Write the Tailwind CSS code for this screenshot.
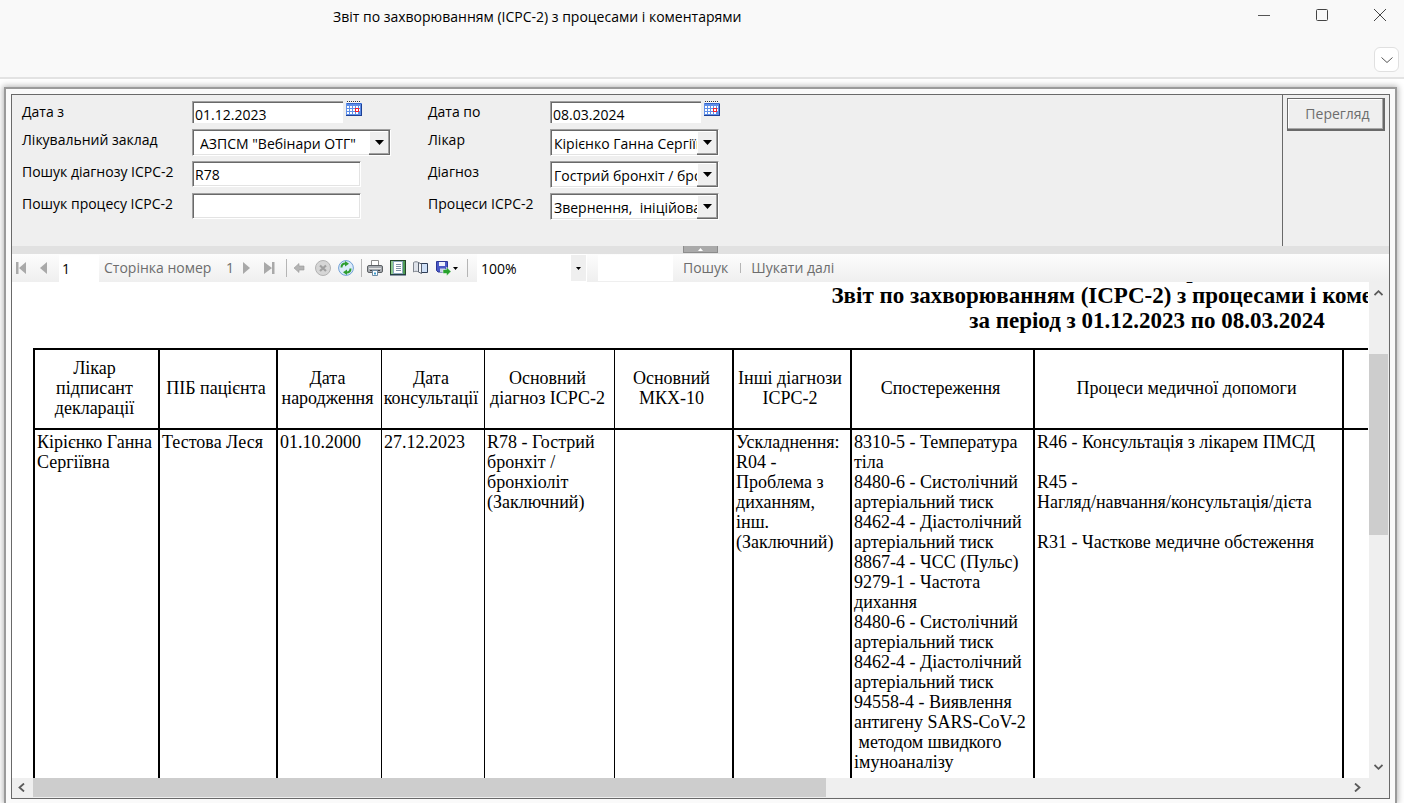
<!DOCTYPE html>
<html lang="uk">
<head>
  <meta charset="UTF-8">
  <meta name="viewport" content="width=device-width, initial-scale=1.0">
  <title>Звіт по захворюванням (ICPC-2) з процесами і коментарями</title>
  <script src="https://cdn.jsdelivr.net/npm/@tailwindcss/browser@4"></script>
</head>
<body class="h-screen flex flex-col overflow-hidden bg-white text-black text-sm leading-[22px] font-['Open_Sans','Noto_Sans',sans-serif]">

  <!-- Title bar -->
  <header class="h-[79px] shrink-0 bg-[#f9f9f9] border-b-2 border-[#e3e3e3] flex justify-between">
    <h1 class="pl-[333px] pt-1.5">Звіт по захворюванням (ICPC-2) з процесами і коментарями</h1>
    <div class="flex flex-col items-end pr-[5px]">
      <div class="flex gap-[30px] pr-[5px]">
        <button aria-label="Згорнути" class="w-7 h-[30px] flex items-center justify-center">
          <svg class="size-3" viewBox="0 0 12 12"><path d="M0 6.5h12" stroke="#555" fill="none"/></svg>
        </button>
        <button aria-label="Розгорнути" class="w-7 h-[30px] flex items-center justify-center">
          <svg class="size-3" viewBox="0 0 12 12"><rect x=".5" y=".5" width="11" height="11" rx="1" stroke="#444" fill="none"/></svg>
        </button>
        <button aria-label="Закрити" class="w-7 h-[30px] flex items-center justify-center">
          <svg class="size-3" viewBox="0 0 12 12"><path d="M0 0l12 12M12 0L0 12" stroke="#444" fill="none"/></svg>
        </button>
      </div>
      <button aria-label="Показати стрічку" class="mt-[17px] size-[25px] rounded-md border border-[#e0e0e0] bg-white flex items-center justify-center">
        <svg class="w-3 h-2" viewBox="0 0 12 8"><path d="M.5 1.5L6 6.500 11.500 1.500" stroke="#555" fill="none"/></svg>
      </button>
    </div>
  </header>

  <main class="flex-1 min-h-0 mt-2 ml-1 mr-[7px] flex flex-col border-2 border-b-0 border-[#9a9a9a] bg-[#fafafa] shadow-[0_0_6px_1px_rgba(0,0,0,0.3)] px-[5px] pt-[5px] pb-1">
    <div class="flex-1 min-h-0 flex flex-col border border-[#696969] bg-white">

      <!-- Parameters -->
      <form class="h-[151px] shrink-0 flex bg-[#efefef]">
        <div class="flex-1 grid grid-cols-[170px_236px_122px_1fr] grid-rows-[28px_32px_32px_32px] items-start pl-2.5 pt-1.5">
          <label for="date-from">Дата з</label>
          <div class="flex gap-[3px]">
            <input id="date-from" value="01.12.2023" class="w-[151px] h-[22px] pt-1 pl-0.5 bg-white border-t border-l border-[#a0a0a0] shadow-[inset_1px_1px_0_#696969]">
            <button type="button" aria-label="Календар" class="size-4">
              <svg class="size-4" viewBox="0 0 16 16"><path d="M0 2h16v13H0z" fill="#5f8fe8"/><path d="M0 14h16v1H0zM15 3h1v12h-1z" fill="#1c3f94"/><path d="M1 1h14" stroke="#fff" stroke-width="2" stroke-dasharray="1 1"/><path d="M1 .5h14" stroke="#333" stroke-dasharray="1 1"/><path d="M1 2.500h14" stroke="#3767cc" /><path d="M1 5h2v2H1zM4 5h2v2H4zM7 5h2v2H7zM10 5h2v2h-2zM13 5h1v2h-1zM1 8h2v2H1zM4 8h2v2H4zM7 8h2v2H7zM13 8h1v2h-1zM1 11h2v2H1zM4 11h2v2H4zM7 11h2v2H7zM10 11h2v2h-2z" fill="#fff"/><rect x="9.500" y="7.500" width="3" height="3" fill="#fff" stroke="#f0202c"/></svg>
            </button>
          </div>
          <label for="date-to">Дата по</label>
          <div class="flex gap-[3px]">
            <input id="date-to" value="08.03.2024" class="w-[151px] h-[22px] pt-1 pl-0.5 bg-white border-t border-l border-[#a0a0a0] shadow-[inset_1px_1px_0_#696969]">
            <button type="button" aria-label="Календар" class="size-4">
              <svg class="size-4" viewBox="0 0 16 16"><path d="M0 2h16v13H0z" fill="#5f8fe8"/><path d="M0 14h16v1H0zM15 3h1v12h-1z" fill="#1c3f94"/><path d="M1 1h14" stroke="#fff" stroke-width="2" stroke-dasharray="1 1"/><path d="M1 .5h14" stroke="#333" stroke-dasharray="1 1"/><path d="M1 2.500h14" stroke="#3767cc" /><path d="M1 5h2v2H1zM4 5h2v2H4zM7 5h2v2H7zM10 5h2v2h-2zM13 5h1v2h-1zM1 8h2v2H1zM4 8h2v2H4zM7 8h2v2H7zM13 8h1v2h-1zM1 11h2v2H1zM4 11h2v2H4zM7 11h2v2H7zM10 11h2v2h-2z" fill="#fff"/><rect x="9.500" y="7.500" width="3" height="3" fill="#fff" stroke="#f0202c"/></svg>
            </button>
          </div>

          <label for="clinic">Лікувальний заклад</label>
          <div class="relative w-[199px] h-[27px]">
            <select id="clinic" class="appearance-none size-full pt-0.5 pl-[7px] pr-5 bg-white border border-[#a0a0a0] border-r-white border-b-white shadow-[inset_1px_1px_0_#696969,inset_-1px_-1px_0_#e3e3e3]"><option>АЗПСМ "Вебінари ОТГ"</option></select>
            <span class="absolute top-0.5 bottom-px right-px w-[21px] bg-[#efefef] border-r border-b border-[#696969] shadow-[inset_-1px_-1px_0_#a0a0a0,inset_1px_1px_0_#fff] flex items-center justify-center pointer-events-none">
              <svg class="w-[9px] h-[5px]" viewBox="0 0 9 5"><path d="M0 0h9L4.500 5z"/></svg>
            </span>
          </div>
          <label for="doctor">Лікар</label>
          <div class="relative w-[169px] h-[27px]">
            <select id="doctor" class="appearance-none size-full pt-0.5 pl-[3px] pr-5 bg-white border border-[#a0a0a0] border-r-white border-b-white shadow-[inset_1px_1px_0_#696969,inset_-1px_-1px_0_#e3e3e3]"><option>Кірієнко Ганна Сергіївна</option></select>
            <span class="absolute top-0.5 bottom-px right-px w-[21px] bg-[#efefef] border-r border-b border-[#696969] shadow-[inset_-1px_-1px_0_#a0a0a0,inset_1px_1px_0_#fff] flex items-center justify-center pointer-events-none">
              <svg class="w-[9px] h-[5px]" viewBox="0 0 9 5"><path d="M0 0h9L4.500 5z"/></svg>
            </span>
          </div>

          <label for="diag-search">Пошук діагнозу ICPC-2</label>
          <input id="diag-search" value="R78" class="w-[169px] h-[26px] pt-px pl-0.5 bg-white border border-[#a0a0a0] border-r-white border-b-white shadow-[inset_1px_1px_0_#696969,inset_-1px_-1px_0_#e3e3e3]">
          <label for="diagnosis">Діагноз</label>
          <div class="relative w-[169px] h-[27px]">
            <select id="diagnosis" class="appearance-none size-full pt-0.5 pl-[3px] pr-5 bg-white border border-[#a0a0a0] border-r-white border-b-white shadow-[inset_1px_1px_0_#696969,inset_-1px_-1px_0_#e3e3e3]"><option>Гострий бронхіт / бронхіоліт</option></select>
            <span class="absolute top-0.5 bottom-px right-px w-[21px] bg-[#efefef] border-r border-b border-[#696969] shadow-[inset_-1px_-1px_0_#a0a0a0,inset_1px_1px_0_#fff] flex items-center justify-center pointer-events-none">
              <svg class="w-[9px] h-[5px]" viewBox="0 0 9 5"><path d="M0 0h9L4.500 5z"/></svg>
            </span>
          </div>

          <label for="proc-search">Пошук процесу ICPC-2</label>
          <input id="proc-search" class="w-[169px] h-[26px] pt-px pl-0.5 bg-white border border-[#a0a0a0] border-r-white border-b-white shadow-[inset_1px_1px_0_#696969,inset_-1px_-1px_0_#e3e3e3]">
          <label for="process">Процеси ICPC-2</label>
          <div class="relative w-[169px] h-[27px]">
            <select id="process" class="appearance-none size-full pt-0.5 pl-[3px] pr-5 bg-white border border-[#a0a0a0] border-r-white border-b-white shadow-[inset_1px_1px_0_#696969,inset_-1px_-1px_0_#e3e3e3]"><option>Звернення, &nbsp;ініційовані пацієнтом</option></select>
            <span class="absolute top-0.5 bottom-px right-px w-[21px] bg-[#efefef] border-r border-b border-[#696969] shadow-[inset_-1px_-1px_0_#a0a0a0,inset_1px_1px_0_#fff] flex items-center justify-center pointer-events-none">
              <svg class="w-[9px] h-[5px]" viewBox="0 0 9 5"><path d="M0 0h9L4.500 5z"/></svg>
            </span>
          </div>
        </div>
        <div class="border-l border-[#696969] px-1 pt-[3px]">
          <button type="button" class="w-[98px] h-[33px] pl-1 border border-r-2 border-b-2 border-[#696969] shadow-[inset_-1px_-1px_0_#a8a8a8,inset_1px_1px_0_#fff] text-[#6d6d6d]">Перегляд</button>
        </div>
      </form>

      <!-- Splitter -->
      <div class="h-2 shrink-0 bg-[#e1e1e1] pl-[671px]">
        <button aria-label="Сховати параметри" class="w-[35px] h-[7px] bg-[#aaa] border-x border-b border-[#8c8c8c] flex items-center justify-center">
          <svg class="w-[5px] h-[3px]" viewBox="0 0 5 3"><path d="M0 3h5L2.500 0z" fill="#fff"/></svg>
        </button>
      </div>

      <!-- Report toolbar -->
      <div class="h-7 shrink-0 flex items-center bg-linear-to-b from-[#fdfdfd] to-[#efefef] text-[#6d6d6d]">
        <button aria-label="Перша сторінка" class="ml-0.5"><svg class="size-4" viewBox="0 0 16 16"><path d="M2 2h2.500v12H2zM12 2v12L5 8z" fill="#a9a9a9"/></svg></button>
        <button aria-label="Попередня сторінка" class="ml-1.5"><svg class="size-4" viewBox="0 0 16 16"><path d="M11 2v12L4 8z" fill="#a9a9a9"/></svg></button>
        <input aria-label="Сторінка" value="1" class="ml-[7px] w-10 h-[27px] pl-[3px] bg-white text-black">
        <span class="ml-[5px] w-[122px]">Сторінка номер</span>
        <span class="w-3">1</span>
        <button aria-label="Наступна сторінка"><svg class="size-4" viewBox="0 0 16 16"><path d="M5 2v12l7-6z" fill="#a9a9a9"/></svg></button>
        <button aria-label="Остання сторінка" class="ml-1.5"><svg class="size-4" viewBox="0 0 16 16"><path d="M12 2h2.500v12H12zM4 2v12l8-6z" fill="#a9a9a9"/></svg></button>
        <span class="ml-2.5 w-px h-[18px] bg-[#b5b5b5]"></span>
        <button aria-label="Назад" class="ml-1"><svg class="size-4" viewBox="0 0 16 16"><path d="M3 8l5-4.500V6h5v4H8v2.500z" fill="#b4b4b4" stroke="#999" stroke-width=".6"/></svg></button>
        <button aria-label="Зупинити" class="ml-2"><svg class="size-4" viewBox="0 0 16 16"><circle cx="8" cy="8" r="7.500" fill="#d6d6d6" stroke="#b2b2b2"/><path d="M5 5.500l6 5.500M11 5.500L5 11" stroke="#a0a0a0" stroke-width="2.200"/></svg></button>
        <button aria-label="Оновити" class="ml-[7px]"><svg class="size-4" viewBox="0 0 16 16"><circle cx="8" cy="8" r="7.400" fill="#dcecfb" stroke="#6f9fd6"/><path d="M3.500 7.500c0-2.500 1.500-4 4-4M12.500 8.500c0 2.500-1.500 4-4 4" stroke="#2f9e32" stroke-width="2" fill="none"/><path d="M7 1l4 2.700L7 6.500zM9 9.500v5.500l-4-2.700z" fill="#2f9e32"/></svg></button>
        <span class="ml-[7px] w-px h-[18px] bg-[#b5b5b5]"></span>
        <button aria-label="Друк" class="ml-[5px]"><svg class="size-4" viewBox="0 0 16 16"><path d="M4.500.5h7V6h-7z" fill="#fff" stroke="#8b8b8b"/><rect x=".5" y="5.500" width="15" height="7" rx="1.500" fill="#a7abb0" stroke="#5d6064"/><path d="M2 8.500h12" stroke="#e4e4e4"/><path d="M3 10.500h10" stroke="#3e4043"/><path d="M5.500 10.500h5v5h-5z" fill="#fff" stroke="#6d8aa3"/><path d="M7 12.500h2v2H7z" fill="#3b9ed0"/></svg></button>
        <button aria-label="Розмітка сторінки" class="ml-[7px]"><svg class="size-4" viewBox="0 0 16 16"><rect x=".5" y=".5" width="15" height="14" fill="#4f9c56" stroke="#24472a"/><path d="M1 1h2v13H1z" fill="#8fcb91"/><rect x="3.500" y="1.500" width="9" height="12" fill="#fff" stroke="#8fa8c0"/><path d="M6 4.500h5M6 6.500h5M6 8.500h5M6 10.500h5" stroke="#7f90a6"/><path d="M0 15h16" stroke="#263b5c"/></svg></button>
        <button aria-label="Параметри сторінки" class="ml-[7px]"><svg class="size-4" viewBox="0 0 16 16"><path d="M.5 2.500c1.500-1 3.500-1 5 0V12c-1.500-1-3.500-1-5 0z" fill="#dfe3ea" stroke="#80868f"/><path d="M7 3.500h7.500v9H7z" fill="#cfe0f7" stroke="#2e3d57"/><path d="M5.500 2.500L8.500 4v9.500l-3-1.500z" fill="#f4f6fa" stroke="#59616e"/></svg></button>
        <button aria-label="Експорт" class="ml-[7px]"><svg class="w-6 h-4" viewBox="0 0 24 16"><path d="M.5 1.500h11v10.500H2L.5 10.500z" fill="#4a58c6" stroke="#2c3694"/><path d="M3 2h6v4H3z" fill="#eef1fb"/><path d="M4 8.500h5V12H4z" fill="#c9cfe9"/><path d="M7 9.500h3.500V7L15 11.500 10.500 16v-2.500H7z" fill="#27a22d" stroke="#fff" stroke-width=".5"/><path d="M17 7h5l-2.500 3z" fill="#000"/></svg></button>
        <span class="ml-[7px] w-px h-[18px] bg-[#b5b5b5]"></span>
        <div class="relative ml-[9px] w-[110px] h-7">
          <select aria-label="Масштаб" class="appearance-none size-full pl-1 pt-px bg-white text-black"><option>100%</option></select>
          <span class="absolute inset-y-px right-px w-[15px] bg-[#efefef] flex items-center justify-center pointer-events-none">
            <svg class="w-[5px] h-[3px]" viewBox="0 0 5 3"><path d="M0 0h5L2.500 3z"/></svg>
          </span>
        </div>
        <input aria-label="Текст пошуку" class="ml-[11px] w-[75px] h-[26px] px-1 bg-white text-black">
        <button class="ml-2.5">Пошук</button>
        <span class="ml-3 mr-2.5 w-px h-2.5 bg-[#b5b5b5]"></span>
        <button>Шукати далі</button>
      </div>

      <!-- Report -->
      <div class="flex-1 min-h-0 flex">
        <div class="flex-1 min-w-0 overflow-hidden font-['Liberation_Serif',serif]">
          <div class="w-[2270px] -mt-6">
            <h2 class="text-center font-bold text-[23px] leading-[25px]">АЗПСМ "Вебінари ОТГ"<br>Звіт по захворюванням (ICPC-2) з процесами і коментарями<br>за період з 01.12.2023 по 08.03.2024</h2>
            <table class="ml-[21px] mt-[15px] w-[2228px] table-fixed border-separate border-spacing-0 text-lg leading-5">
              <colgroup>
                <col class="w-[125px]"><col class="w-[118px]"><col class="w-[105px]"><col class="w-[103px]"><col class="w-[130px]"><col class="w-[118px]"><col class="w-[118px]"><col class="w-[183px]"><col class="w-[309px]"><col>
              </colgroup>
              <thead>
                <tr class="h-20 [&>th]:border-t-2 [&>th]:border-black [&>th]:font-normal [&>th]:pr-1 [&>th]:pb-0.5 [&>th]:whitespace-nowrap">
                  <th class="border-l-2">Лікар<br>підписант<br>декларації</th>
                  <th class="border-l-2">ПІБ пацієнта</th>
                  <th class="border-l-2">Дата<br>народження</th>
                  <th class="border-l">Дата<br>консультації</th>
                  <th class="border-l">Основний<br>діагноз ICPC-2</th>
                  <th class="border-l">Основний<br>МКХ-10</th>
                  <th class="border-l-2">Інші діагнози<br>ICPC-2</th>
                  <th class="border-l-2">Спостереження</th>
                  <th class="border-l-2">Процеси медичної допомоги</th>
                  <th class="border-x-2"></th>
                </tr>
              </thead>
              <tbody>
                <tr class="h-[400px] align-top [&>td]:border-y-2 [&>td]:border-black [&>td]:pl-0.5 [&>td]:pt-0.5 [&>td]:whitespace-nowrap">
                  <td class="border-l-2">Кірієнко Ганна<br>Сергіївна</td>
                  <td class="border-l-2">Тестова Леся</td>
                  <td class="border-l-2">01.10.2000</td>
                  <td class="border-l">27.12.2023</td>
                  <td class="border-l">R78 - Гострий<br>бронхіт /<br>бронхіоліт<br>(Заключний)</td>
                  <td class="border-l"></td>
                  <td class="border-l-2">Ускладнення:<br>R04 -<br>Проблема з<br>диханням,<br>інш.<br>(Заключний)</td>
                  <td class="border-l-2">8310-5 - Температура<br>тіла<br>8480-6 - Систолічний<br>артеріальний тиск<br>8462-4 - Діастолічний<br>артеріальний тиск<br>8867-4 - ЧСС (Пульс)<br>9279-1 - Частота<br>дихання<br>8480-6 - Систолічний<br>артеріальний тиск<br>8462-4 - Діастолічний<br>артеріальний тиск<br>94558-4 - Виявлення<br>антигену SARS-CoV-2<br>&nbsp;методом швидкого<br>імуноаналізу</td>
                  <td class="border-l-2">R46 - Консультація з лікарем ПМСД<br><br>R45 -<br>Нагляд/навчання/консультація/дієта<br><br>R31 - Часткове медичне обстеження</td>
                  <td class="border-x-2"></td>
                </tr>
              </tbody>
            </table>
          </div>
        </div>
        <!-- Vertical scrollbar -->
        <div class="w-5 ml-px shrink-0 bg-[#efefef] flex flex-col items-center">
          <svg class="mt-2 mr-px w-[9px] h-1.5" viewBox="0 0 9 6"><path d="M.5 5L4.500 1.200 8.500 5" stroke="#5a5a5a" stroke-width="1.800" fill="none"/></svg>
          <div class="w-[19px] h-[181px] mt-[58px] mb-auto mr-px bg-[#cdcdcd]"></div>
          <svg class="mb-2 mr-px w-[9px] h-1.5" viewBox="0 0 9 6"><path d="M.5 1L4.500 4.800 8.500 1" stroke="#5a5a5a" stroke-width="1.800" fill="none"/></svg>
        </div>
      </div>
      <!-- Horizontal scrollbar -->
      <div class="h-5 shrink-0 bg-[#efefef] flex items-center pr-7 pb-px">
        <svg class="ml-1.5 mr-2 w-[7px] h-[9px]" viewBox="0 0 7 9"><path d="M6 .5L1.500 4.500 6 8.500" stroke="#5a5a5a" stroke-width="1.800" fill="none"/></svg>
        <div class="flex-1 h-[19px]">
          <div class="w-3/5 h-full bg-[#cdcdcd]"></div>
        </div>
        <svg class="w-[7px] h-[9px]" viewBox="0 0 7 9"><path d="M1 .5l4.500 4L1 8.500" stroke="#5a5a5a" stroke-width="1.800" fill="none"/></svg>
      </div>
    </div>
  </main>
</body>
</html>
